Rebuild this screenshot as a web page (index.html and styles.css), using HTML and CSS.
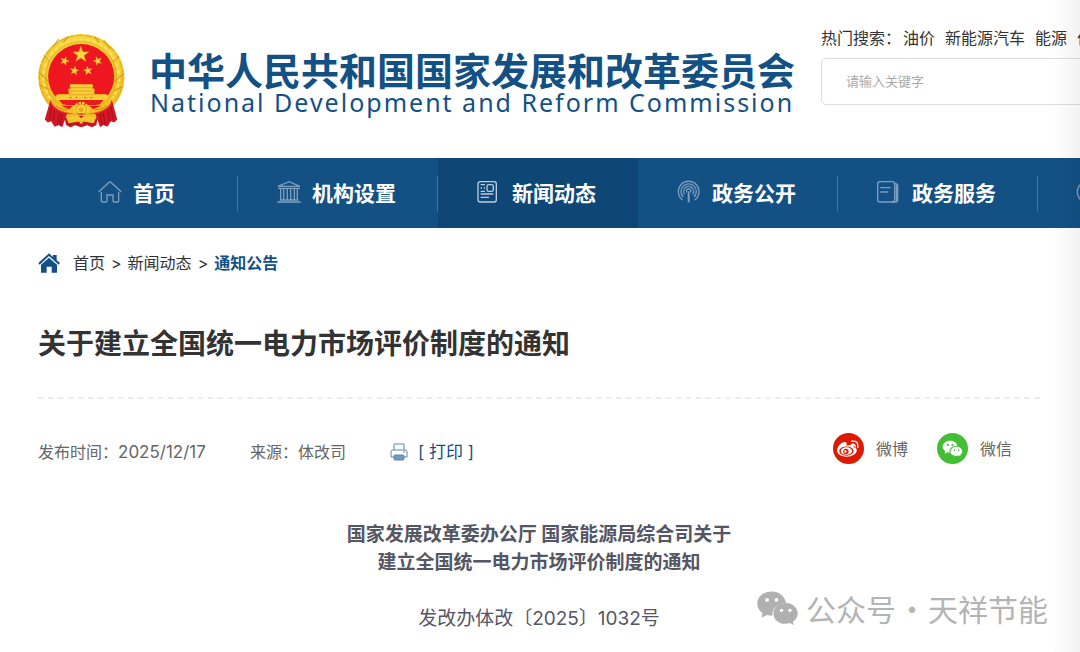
FILE: index.html
```html
<!DOCTYPE html>
<html lang="zh-CN">
<head>
<meta charset="utf-8">
<meta name="viewport" content="width=device-width, initial-scale=1">
<title>关于建立全国统一电力市场评价制度的通知</title>
<link rel="stylesheet" href="styles.css">
</head>
<body>
<header class="header">
  <svg class="emblem" viewBox="27 27 258 279" aria-hidden="true">
    <defs>
      <linearGradient id="gold" x1="0" y1="0" x2="0" y2="1"><stop offset="0" stop-color="#f3d63c"/><stop offset="1" stop-color="#f2b51c"/></linearGradient>
      <path id="star" d="M0-1 .235-.324.951-.309.38.124.588.809 0 .4-.588.809-.38.124-.951-.309-.235-.324z"/>
    </defs>
    <circle cx="155.500" cy="155" r="128" fill="url(#gold)"/>
    <circle cx="155" cy="155" r="124" fill="none" stroke="#dfac20" stroke-width="3" stroke-dasharray="22 5"/>
    <circle cx="155" cy="155" r="112" fill="none" stroke="#f7e15c" stroke-width="7" stroke-dasharray="14 6"/>
    <circle cx="155" cy="155" r="105" fill="none" stroke="#dda51b" stroke-width="2"/>
    <path d="M44 90l18 20M30 140l26 26M34 180l28 12M88 42l-16 22M222 46l18 24M268 92l-18 18M282 144l-28 24M278 182l-26 14M116 34l-14 18M194 34l14 18" stroke="#d39a18" stroke-width="3"/>
    <ellipse cx="155" cy="153" rx="98" ry="96" fill="#ee171f"/>
    <g fill="#f8d83e" stroke="#e29b1c" stroke-width=".05">
      <use href="#star" transform="translate(154 88) scale(25)"/>
      <use href="#star" transform="translate(106 107) rotate(20) scale(14)"/>
      <use href="#star" transform="translate(204 107) rotate(-20) scale(14)"/>
      <use href="#star" transform="translate(135 136) rotate(10) scale(14)"/>
      <use href="#star" transform="translate(175 136) rotate(-10) scale(14)"/>
    </g>
    <path d="M122 176h66l3 8h-3v5h5l4 6h-3v10h34l7 5-2 13H81l-2-13 7-5h32v-10h-3l4-6h5v-5h-3z" fill="#f6cd35"/>
    <path d="M120 186h70M118 196h74M84 207h142" stroke="#d9981d" stroke-width="2"/>
    <path d="M120 216h6m12 0h6m20 0h6m12 0h6" stroke="#c9820f" stroke-width="4"/>
    <path d="M60 217q14 11 28 17l26 4h82l26-4 28-17-2 38-42 22h-98l-42-22z" fill="#f2bd22"/>
    <path d="M92 226h126l-8 10h-32q-23-16-46 0h-32z" fill="#ee171f"/>
    <path d="M96 240h35l-12 10zM214 240h-35l12 10z" fill="#ee171f"/>
    <path d="M114 252q-25-2-34-12M196 252q25-2 34-12" fill="none" stroke="#c7870e" stroke-width="3"/>
    <circle cx="155" cy="251" r="19" fill="none" stroke="#f9d843" stroke-width="8" stroke-dasharray="7 3"/>
    <circle cx="155" cy="251" r="16" fill="#f7ce34" stroke="#cf8e14" stroke-width="2"/>
    <circle cx="155" cy="252" r="7" fill="#e7a71d"/>
    <path d="M64 222q4 20 31 33 28 14 60 7 32 7 60-7 27-13 31-33l16 59-9 9-10-4-10 16-12-5-10 7-14-40-42 2-42-2-14 40-11-7-12 5-10-16-10 4-9-9z" fill="#d31724"/>
    <path d="M106 276q48-13 98 0l-4 21-13 7-14-6-18 6-18-6-14 6-13-7z" fill="#c81522"/>
    <path d="M110 274l34-7 11 10 11-10 34 7-8 18-30-5-7 8-7-8-30 5z" fill="#f5c62e"/>
    <path d="M67 243l-6 38M76 252l-5 34M91 260l-6 38M99 264l-5 33M243 243l7 38M234 252l6 34M220 260l7 38M211 264l6 33" stroke="#a50f1b" stroke-width="3"/>
    <path d="M67 234q18 25 57 30M244 234q-18 25-58 30" fill="none" stroke="#f44" stroke-width="3"/>
  </svg>
  <div class="brand">
    <div class="brand-zh">中华人民共和国国家发展和改革委员会</div>
    <div class="brand-en" lang="en">National Development and Reform Commission</div>
  </div>
  <form class="search">
    <div class="hot"><span>热门搜索：</span><a href="#">油价</a><a href="#">新能源汽车</a><a href="#">能源</a><a href="#">价格</a></div>
    <input class="search-box" type="text" aria-label="搜索" placeholder="请输入关键字">
  </form>
</header>

<nav class="nav">
  <a class="nav-item" href="#">
    <svg class="nav-icon" viewBox="296 93 72 72"><path d="M298 129l32-30q2-2 4 0l32 30M306 129v26q0 4 4 4h10q3 0 3-3v-18h18v18q0 3 3 3h10q4 0 4-4v-26"/></svg>首页</a>
  <a class="nav-item" href="#">
    <svg class="nav-icon" viewBox="833 93 72 72"><path d="M836 112l33-14 33 14zM836 118h66M841 153h56M834 159h70M844 118v35M853 118v35M864 118v35M874 118v35M885 118v35M894 118v35"/></svg>机构设置</a>
  <a class="nav-item nav-item-active" href="#" aria-current="page">
    <svg class="nav-icon" viewBox="351 93 72 72"><rect x="354" y="98" width="55" height="61" rx="7"/><rect x="381" y="107" width="19" height="20" rx="5"/><path d="M362 107h13M362 117h4m5 0h4M362 127h13M362 135h38M362 145h25"/></svg>新闻动态</a>
  <a class="nav-item" href="#">
    <svg class="nav-icon" viewBox="949 93 72 72"><path d="M966 153a31 31 0 1 1 36 0M968 144a23 23 0 1 1 32 0M972 136a15 15 0 1 1 24 0M978 130a7 7 0 1 1 12 0"/><path class="mast" d="M984 127v33"/></svg>政务公开</a>
  <a class="nav-item" href="#">
    <svg class="nav-icon" viewBox="470 93 72 72"><rect x="472" y="98" width="51" height="61" rx="7"/><path d="M523 104h3q6 0 6 6v43q0 6-6 6h-12M528 107v48M480 116h31M480 129h24"/></svg>政务服务</a>
  <a class="nav-item nav-item-more" href="#" aria-label="更多">
    <svg class="nav-icon" viewBox="0 0 72 72"><circle cx="36" cy="36" r="32"/></svg></a>
</nav>

<main class="main">
  <nav class="crumbs">
    <svg class="crumb-icon" viewBox="116 309 66 60" aria-hidden="true"><path d="M117 339l32-29 12 11v-6h11v16l10 8-4 5-29-26-28 26zM125 344l24-21 24 21v24h-16v-18h-15v18h-17z"/></svg>
    <a href="#">首页</a><span>&gt;</span><a href="#">新闻动态</a><span>&gt;</span><a class="crumb-here" href="#">通知公告</a>
  </nav>
  <h1 class="title">关于建立全国统一电力市场评价制度的通知</h1>
  <div class="meta">
    <div class="facts">
      <span>发布时间：<span class="date">2025/12/17</span></span>
      <span>来源：体改司</span>
      <button class="print" type="button">
        <svg class="print-icon" viewBox="0 0 18 18" aria-hidden="true"><path d="M4 7V1h10v6M4 14H1V9q0-2 2-2h12q2 0 2 2v5h-3"/><rect class="tray" x="4" y="12" width="10" height="5" rx="1"/><path d="M13 9h2"/></svg>[ 打印 ]</button>
    </div>
    <div class="share">
      <a class="share-link" href="#">
        <svg class="share-icon" viewBox="0 0 30 30" aria-hidden="true"><circle cx="15" cy="15" r="15" fill="#dc1a00"/><path fill="#fff" d="M13 11c1-2-1-3-3-2-3 1-6 5-6 8 0 4 5 6 9 6 6 0 10-3 10-6 0-2-1-3-3-3 .8-2.500-1-4-5-2-1 .4-2 .2-2-1z"/><ellipse cx="13" cy="17.500" rx="7" ry="4.500" fill="#dc1a00"/><ellipse cx="13" cy="17.500" rx="5.500" ry="3.600" fill="#fff"/><circle cx="12.500" cy="17.800" r="2.600" fill="#dc1a00"/><circle cx="12" cy="18" r="1.200" fill="#fff"/><path d="M18 8q7-1 6 6M18.500 11q3-.5 3 2.500" fill="none" stroke="#fff" stroke-width="1.300" stroke-linecap="round"/></svg>微博</a>
      <a class="share-link" href="#">
        <svg class="share-icon" viewBox="0 0 30 30" aria-hidden="true"><circle cx="15" cy="15" r="15" fill="#44bf35"/><path fill="#fff" d="M12.500 7.500c-4 0-7 2.600-7 5.800 0 1.800 1 3.300 2.600 4.400l-.8 2.300 2.800-1.300 2.600.4c4 0 7.200-2.600 7.200-5.800s-3.200-5.800-7.400-5.800z"/><path fill="#fff" stroke="#44bf35" d="M18.800 12.800c3.500 0 6.200 2.200 6.200 5 0 1.500-.8 2.700-2 3.600l.5 2-2.200-1.100c-5 1.400-8.800-1.200-8.800-4.500 0-2.800 2.800-5 6.300-5z"/><g fill="#44bf35"><circle cx="10.500" cy="11.500" r="1"/><circle cx="15" cy="11.500" r="1"/><circle cx="17" cy="16.500" r=".8"/><circle cx="21" cy="16.500" r=".8"/></g></svg>微信</a>
    </div>
  </div>
  <article class="article">
    <h2 class="article-title">国家发展改革委办公厅 国家能源局综合司关于<br>建立全国统一电力市场评价制度的通知</h2>
    <p class="article-number">发改办体改〔2025〕1032号</p>
  </article>
</main>

<div class="watermark">
  <svg class="watermark-icon" viewBox="50 66 122 100" aria-hidden="true"><path d="M94 67c-24 0-43 15-43 36 0 12 6 21 15 28l-2 14 16-8q8 2 16 2c-2-21 16-38 40-38-3-20-21-34-42-34z"/><path d="M135 101c-20 0-36 13-36 31s16 31 36 31q7 0 13-2l11 6-2-11c9-6 14-14 14-24 0-18-16-31-36-31z"/><g fill="#fff"><circle cx="80" cy="92" r="5.500"/><circle cx="108" cy="92" r="5.500"/><circle cx="123" cy="123" r="5"/><circle cx="148" cy="123" r="5"/></g></svg>
  <span>公众号</span><span class="dot">·</span><span>天祥节能</span>
</div>
<div class="edge-shade"></div>
</body>
</html>
```
FILE: styles.css
```css
* {
  box-sizing: border-box;
}

body {
  position: relative;
  margin: 0;
  min-height: 100vh;
  overflow-x: hidden;
  background: #fff;
  color: #333;
  font: 16px/24px Inter, "Noto Sans CJK SC", sans-serif;
}

a {
  color: inherit;
  text-decoration: none;
}

/* Header */
.header {
  display: flex;
  align-items: flex-start;
  height: 158px;
  padding-left: 38px;
  overflow: hidden;
}

.emblem {
  flex: none;
  width: 87px;
  height: 94px;
  margin-top: 34px;
}

.brand {
  flex: none;
  width: 696px;
  margin-top: 49px;
  padding-left: 24px;
  color: #135185;
  white-space: nowrap;
}

.brand-zh {
  font: bold 38px/40px "Noto Sans CJK SC", sans-serif;
}

.brand-en {
  padding-left: 1px;
  font: 25px/26px "Noto Sans", sans-serif;
  letter-spacing: 2px;
}

.search {
  flex: 1 0 320px;
  margin-top: 26px;
}

.hot {
  display: flex;
  gap: 10px;
  white-space: nowrap;
}

.hot span {
  margin-right: -8px;
}

.search-box {
  display: block;
  width: 100%;
  height: 47px;
  margin-top: 8px;
  padding: 0 24px 2px;
  border: 1px solid #ddd;
  border-radius: 5px;
  background: #fff;
  font: 13px/20px "Noto Sans CJK SC", sans-serif;
}

.search-box::placeholder {
  color: #aaa;
}

/* Main navigation */
.nav {
  display: flex;
  height: 70px;
  padding-left: 38px;
  overflow: hidden;
  background: #135185;
  color: #fff;
  font: bold 21px/30px "Noto Sans CJK SC", sans-serif;
}

.nav-item {
  position: relative;
  display: flex;
  flex: none;
  align-items: center;
  justify-content: center;
  gap: 11px;
  width: 200px;
  padding: 0 3px 2px 0;
}

.nav-item::after {
  content: "";
  position: absolute;
  top: 18px;
  right: 0;
  width: 1px;
  height: 35px;
  background: #42749d;
}

.nav-item-active {
  background: #0e4776;
}

.nav-item-active::after {
  display: none;
}

.nav-item-more {
  justify-content: flex-start;
  padding-left: 38px;
}

.nav-icon {
  width: 24px;
  height: 24px;
  fill: none;
  stroke: #7d9fbd;
  stroke-width: 4;
}

.nav-item-active .nav-icon {
  stroke: #bccddd;
}

.mast {
  stroke-width: 6;
}

/* Page content */
.main {
  padding: 23px 40px 17px 38px;
}

.crumbs {
  display: flex;
  align-items: center;
  gap: 6px;
}

.crumb-icon {
  width: 22px;
  height: 20px;
  margin-right: 7px;
  fill: #135185;
}

.crumb-here {
  color: #135185;
  font-weight: bold;
}

.title {
  margin: 0;
  padding: 49px 0 33px;
  border-bottom: 2px dashed #eee;
  font-size: 28px;
  line-height: 40px;
  font-weight: bold;
}

.meta {
  display: flex;
  align-items: flex-start;
  justify-content: space-between;
  margin-top: 34px;
  color: #666;
}

.facts {
  display: flex;
  gap: 44px;
  padding-top: 7px;
}

.date {
  font-size: 17px;
}

.print {
  display: flex;
  align-items: center;
  gap: 10px;
  padding: 0;
  border: 0;
  background: none;
  color: #135185;
  font: inherit;
  font-size: 17px;
}

.print-icon {
  width: 18px;
  height: 18px;
  fill: none;
  stroke: #5b87b0;
  stroke-width: 1;
}

.tray {
  fill: #7499bb;
}

.share {
  display: flex;
  gap: 29px;
  padding-right: 28px;
}

.share-link {
  display: flex;
  align-items: center;
  gap: 12px;
}

.share-icon {
  width: 31px;
  height: 31px;
}

.article {
  padding-top: 57px;
  color: #555663;
  font-size: 19px;
  line-height: 28px;
  text-align: center;
}

.article-title {
  margin: 0;
  font: inherit;
  font-weight: bold;
}

.article-number {
  margin: 28px 0 0;
}

/* Overlays */
.watermark {
  position: absolute;
  right: 32px;
  bottom: 24px;
  display: flex;
  align-items: center;
  color: #b4b4b4;
  font: 30px/40px "Noto Sans CJK SC", sans-serif;
}

.watermark-icon {
  width: 41px;
  height: 34px;
  margin-right: 8px;
  fill: #b0b0b0;
}

.dot {
  width: 32px;
  text-align: center;
}

.edge-shade {
  position: absolute;
  top: 0;
  right: 0;
  bottom: 0;
  width: 28px;
  background: linear-gradient(to right, rgba(0, 0, 0, 0), rgba(0, 0, 0, 0.05));
  pointer-events: none;
}
```
